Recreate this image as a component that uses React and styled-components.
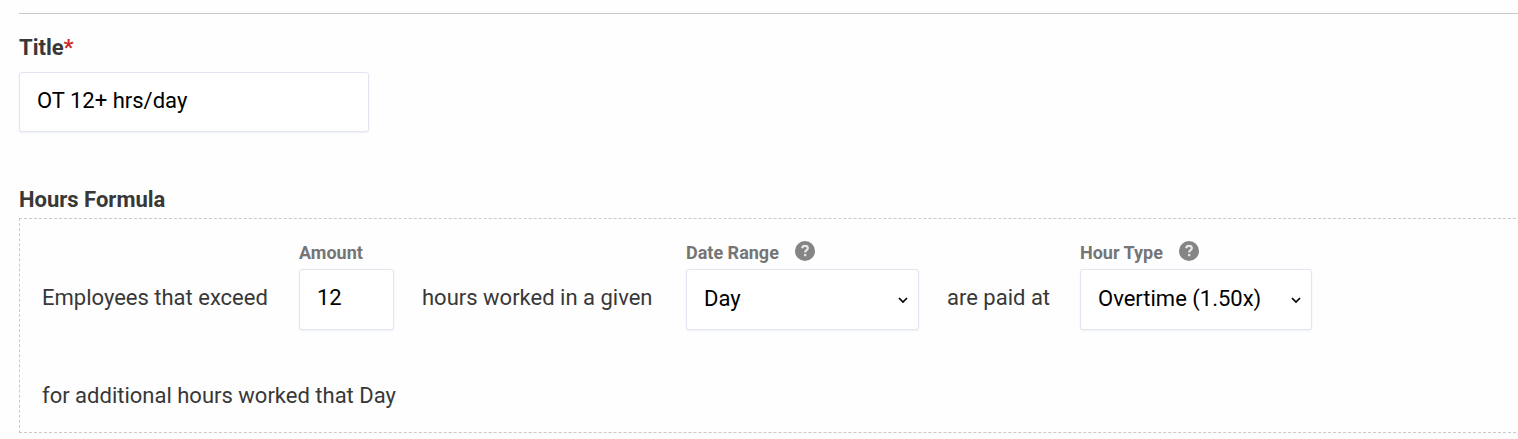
import React, { useState } from 'react';
import styled, { createGlobalStyle } from 'styled-components';

const GlobalStyle = createGlobalStyle`
  * {
    box-sizing: border-box;
  }
  body {
    margin: 0;
    background: #fefefe;
    color: #383838;
    font-family: Roboto, sans-serif;
    font-size: 22px;
    line-height: 28px;
  }
`;

const Form = styled.form`
  margin: 13px 0 0 19px;
  border-top: 1px solid #cacaca;
  padding-top: 20px;
`;

const TitleField = styled.div`
  margin-bottom: 54px;
`;

const TitleLabel = styled.label`
  display: block;
  margin-bottom: 10px;
  font-weight: 700;
`;

const Required = styled.span`
  color: #cc2a2a;
`;

const Input = styled.input`
  display: block;
  width: ${(props) => props.$width};
  height: ${(props) => props.$height || '61px'};
  padding: 0 17px 4px;
  border: 1px solid #e1e5ef;
  border-radius: 3px;
  background: #fff;
  box-shadow: 0 1px 2px rgba(40, 60, 110, 0.08);
  color: #000;
  font: inherit;
`;

const SelectWrap = styled.div`
  position: relative;
  width: ${(props) => props.$width};
`;

const Select = styled(Input).attrs({ as: 'select' })`
  appearance: none;
  padding-bottom: 2px;
`;

const Chevron = styled.svg`
  position: absolute;
  top: 26px;
  right: 10px;
  width: 12px;
  height: 10px;
  pointer-events: none;
`;

const SectionTitle = styled.h2`
  margin: 0;
  padding-bottom: 4px;
  font-size: 22px;
  line-height: 28px;
`;

const FormulaBox = styled.div`
  display: flex;
  flex-wrap: wrap;
  align-items: flex-end;
  column-gap: 28px;
  row-gap: 52px;
  margin-right: 2px;
  padding: 20px 22px 4px;
  border: 1px dashed #cacaca;
  border-right: 0;
`;

const Text = styled.span`
  min-width: ${(props) => props.$min || 'auto'};
  padding-bottom: 18px;
`;

const LastLine = styled(Text)`
  flex-basis: 100%;
`;

const Field = styled.div`
  display: flex;
  flex-direction: column;
  gap: 2px;
`;

const LabelRow = styled.div`
  display: flex;
  align-items: center;
  gap: 16px;
  height: 28px;
  color: #757575;
  font-size: 18px;
  font-weight: 700;
`;

const HelpButton = styled.button`
  display: flex;
  margin-bottom: 4px;
  padding: 0;
  border: 0;
  background: none;
  cursor: pointer;
`;

const Help = ({ label }) => (
  <HelpButton type="button" aria-label={label}>
    <svg width="20" height="20" viewBox="0 0 20 20">
      <circle cx="10" cy="10" r="10" fill="#858585" />
      <path
        d="M7.2 7.3C7.3 5.6 8.5 4.9 10 4.9C11.7 4.9 12.8 5.8 12.8 7.2C12.8 9.2 10.1 9.1 10.1 11.5"
        fill="none"
        stroke="#e6e6e6"
        strokeWidth="2.2"
      />
      <rect x="9" y="13" width="2.3" height="2.2" fill="#e6e6e6" />
    </svg>
  </HelpButton>
);

const Dropdown = ({ id, width, value, options, onChange }) => (
  <SelectWrap $width={width}>
    <Select id={id} $width="100%" value={value} onChange={(e) => onChange(e.target.value)}>
      {options.map((option) => (
        <option key={option}>{option}</option>
      ))}
    </Select>
    <Chevron viewBox="0 0 12 10">
      <path d="M2 3L6 7L10 3" fill="none" stroke="#000" strokeWidth="1.7" />
    </Chevron>
  </SelectWrap>
);

const App = () => {
  const [title, setTitle] = useState('OT 12+ hrs/day');
  const [amount, setAmount] = useState('12');
  const [range, setRange] = useState('Day');
  const [hourType, setHourType] = useState('Overtime (1.50x)');

  return (
    <>
      <GlobalStyle />
      <Form>
        <TitleField>
          <TitleLabel htmlFor="title">
            Title<Required>*</Required>
          </TitleLabel>
          <Input
            id="title"
            $width="350px"
            $height="60px"
            value={title}
            onChange={(e) => setTitle(e.target.value)}
          />
        </TitleField>

        <SectionTitle>Hours Formula</SectionTitle>
        <FormulaBox>
          <Text $min="229px">Employees that exceed</Text>
          <Field>
            <LabelRow>
              <label htmlFor="amount">Amount</label>
            </LabelRow>
            <Input id="amount" $width="95px" value={amount} onChange={(e) => setAmount(e.target.value)} />
          </Field>
          <Text $min="236px">hours worked in a given</Text>
          <Field>
            <LabelRow>
              <label htmlFor="range">Date Range</label>
              <Help label="About date range" />
            </LabelRow>
            <Dropdown id="range" width="233px" value={range} options={['Day', 'Week']} onChange={setRange} />
          </Field>
          <Text $min="105px">are paid at</Text>
          <Field>
            <LabelRow>
              <label htmlFor="hour-type">Hour Type</label>
              <Help label="About hour type" />
            </LabelRow>
            <Dropdown
              id="hour-type"
              width="232px"
              value={hourType}
              options={['Overtime (1.50x)', 'Double Time (2.00x)']}
              onChange={setHourType}
            />
          </Field>
          <LastLine>for additional hours worked that {range}</LastLine>
        </FormulaBox>
      </Form>
    </>
  );
};

export default App;
